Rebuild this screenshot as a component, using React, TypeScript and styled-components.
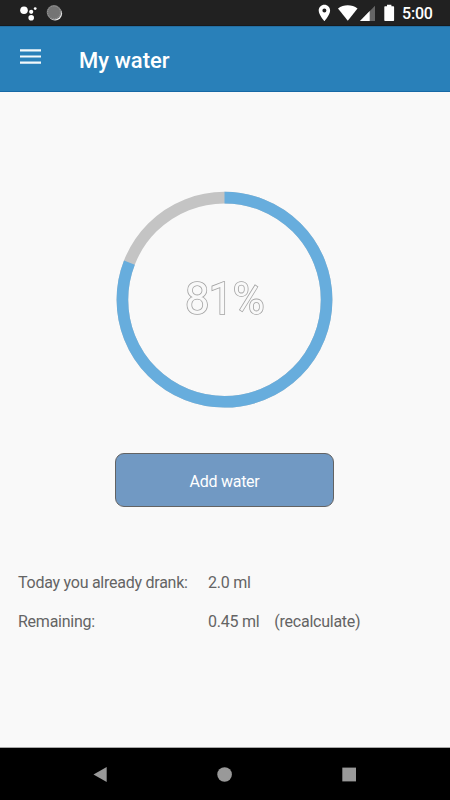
import React from "react";
import styled, { createGlobalStyle } from "styled-components";

const GlobalStyle = createGlobalStyle`
  *, *::before, *::after { box-sizing: border-box; }
  body { margin: 0; background: #f9f9f9; font-family: Roboto, sans-serif; }
`;

const Screen = styled.div`
  width: 450px;
  height: 800px;
  display: flex;
  flex-direction: column;
  background: #f9f9f9;
  overflow: hidden;
`;

const StatusBar = styled.header`
  height: 26px;
  flex: none;
  display: flex;
  justify-content: space-between;
  background: #212121;
  border-bottom: 1px solid #171a1d;
`;

const StatusIcons = styled.svg`
  display: block;
  height: 25px;
`;

const StatusRight = styled.div`
  display: flex;
  padding-right: 17px;
`;

const Clock = styled.span`
  width: 31px;
  font-size: 16px;
  font-weight: 500;
  line-height: 28px;
  letter-spacing: -0.2px;
  color: #fff;
  white-space: nowrap;
`;

const AppBar = styled.div`
  height: 66px;
  flex: none;
  display: flex;
  align-items: flex-start;
  padding-left: 20px;
  background: #2980b9;
  border-top: 1px solid #236fa3;
  border-bottom: 1px solid #1769a6;
`;

const MenuButton = styled.button`
  width: 21px;
  height: 15px;
  margin: 22px 38px 0 0;
  padding: 0;
  border: 0;
  background: none;
  display: flex;
  svg { display: block; }
`;

const Title = styled.h1`
  margin: 0;
  font-size: 22px;
  font-weight: 500;
  line-height: 68px;
  color: #fff;
`;

const Content = styled.main`
  flex: 1;
  display: flex;
  flex-direction: column;
`;

const Progress = styled.div`
  display: grid;
  place-items: center;
  width: 217px;
  height: 217px;
  margin: 99px 0 0 116px;
  > * { grid-area: 1 / 1; }
`;

const Percent = styled.span`
  padding-right: 1px;
  font-size: 43.5px;
  line-height: 51px;
  letter-spacing: -0.6px;
  color: #f9f9f9;
  paint-order: stroke fill;
  -webkit-text-stroke: 1.6px #a2a2a2;
  will-change: transform;
`;

const AddButton = styled.button`
  width: 219px;
  height: 54px;
  margin: 45px 0 0 115px;
  padding: 3px 0 0;
  border: 1px solid #636363;
  border-radius: 9px;
  background: #7199c3;
  color: #fff;
  font: 400 16px/20px Roboto, sans-serif;
  letter-spacing: -0.25px;
`;

const Stats = styled.dl`
  display: grid;
  grid-template-columns: 190px auto;
  grid-auto-rows: 39px;
  margin: 56px 0 0;
  padding-left: 18px;
  font-size: 16px;
  line-height: 39px;
  letter-spacing: -0.25px;
  color: #646464;
`;

const Label = styled.dt`
  white-space: nowrap;
`;

const Value = styled.dd`
  margin: 0;
  display: flex;
  gap: 15px;
`;

const NavBar = styled.nav`
  height: 53px;
  flex: none;
  display: flex;
  align-items: center;
  justify-content: space-between;
  padding: 0 93px;
  background: #000;
  border-top: 1px solid #a8a8a8;
  svg { display: block; }
`;

const RADIUS = 102.1;
const LENGTH = 2 * Math.PI * RADIUS;
const FRACTION = 0.808;

function Ring() {
  return (
    <svg width="217" height="217" viewBox="0 0 217 217">
      <g fill="none" strokeWidth="11.6" transform="rotate(-90 108.5 108.7)">
        <circle cx="108.5" cy="108.7" r={RADIUS} stroke="#c4c4c4" />
        <circle
          cx="108.5"
          cy="108.7"
          r={RADIUS}
          stroke="#67addd"
          strokeDasharray={`${LENGTH * FRACTION} ${LENGTH}`}
        />
      </g>
    </svg>
  );
}

export default function App() {
  return (
    <>
      <GlobalStyle />
      <Screen>
        <StatusBar>
          <StatusIcons width="80" viewBox="0 0 80 25">
            <g fill="#fff">
              <circle cx="24" cy="10.3" r="3.8" />
              <circle cx="31.2" cy="11.8" r="2.1" />
              <circle cx="35.2" cy="8.6" r="1.4" />
              <circle cx="31.2" cy="17.7" r="2.8" />
            </g>
            <circle cx="55.1" cy="13.6" r="7" fill="#e8e8e8" />
            <circle cx="54" cy="12.4" r="7.3" fill="#747474" />
            <circle cx="54" cy="12.4" r="6.4" fill="none" stroke="#a0a0a0" strokeWidth="1" strokeDasharray="1 1" />
          </StatusIcons>
          <StatusRight>
            <StatusIcons width="84" viewBox="318 0 84 25">
              <path
                fill="#fff"
                fillRule="evenodd"
                d="M324.4 4.8c-3.2 0-5.7 2.5-5.7 5.6 0 4.2 5.7 10.7 5.7 10.7s5.7-6.5 5.7-10.7c0-3.1-2.5-5.6-5.7-5.6zm0 3.6a2 2 0 1 1 0 4 2 2 0 0 1 0-4z"
              />
              <path fill="#fff" d="M338 8.5c5.5-4.4 14-4.4 19.5 0l-9.7 12.3z" />
              <path fill="#666" d="M375 5.8V21h-15z" />
              <path fill="#fff" d="M369.7 11.1V21H360z" />
              <path
                fill="#fff"
                d="M387 4.8h4.4v1.5h1.7c.6 0 1 .4 1 1v12.6c0 .6-.4 1-1 1h-7.8c-.6 0-1-.4-1-1V7.3c0-.6.4-1 1-1h1.7z"
              />
            </StatusIcons>
            <Clock>5:00</Clock>
          </StatusRight>
        </StatusBar>
        <AppBar>
          <MenuButton aria-label="Menu">
            <svg width="21" height="15" viewBox="0 0 21 15">
              <path fill="#fff" fillOpacity="0.94" d="M0 .3h21v2.2H0zM0 6.4h21v2.2H0zM0 12.5h21v2.2H0z" />
            </svg>
          </MenuButton>
          <Title>My water</Title>
        </AppBar>
        <Content>
          <Progress>
            <Ring />
            <Percent>81%</Percent>
          </Progress>
          <AddButton>Add water</AddButton>
          <Stats>
            <Label>Today you already drank:</Label>
            <Value>2.0 ml</Value>
            <Label>Remaining:</Label>
            <Value>
              <span>0.45 ml</span>
              <span>(recalculate)</span>
            </Value>
          </Stats>
        </Content>
        <NavBar>
          <svg width="14" height="15" viewBox="0 0 14 15">
            <path fill="#999" d="M.5 7.5 13.7.1v14.8z" />
          </svg>
          <svg width="15" height="15" viewBox="0 0 15 15">
            <circle cx="7.6" cy="7.5" r="7.3" fill="#999" />
          </svg>
          <svg width="15" height="15" viewBox="0 0 15 15">
            <path fill="#999" d="M.3.6h13.7v13.8H.3z" />
          </svg>
        </NavBar>
      </Screen>
    </>
  );
}
